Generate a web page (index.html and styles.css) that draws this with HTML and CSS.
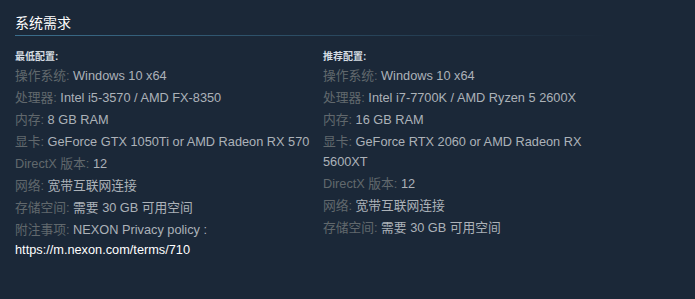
FILE: index.html
```html
<!DOCTYPE html>
<html lang="zh-CN">
<head>
<meta charset="utf-8">
<title>系统需求</title>
<link rel="stylesheet" href="styles.css">
</head>
<body>
<div class="sysreq">
  <h2 class="title">系统需求</h2>
  <div class="cols">
    <div class="col">
      <div class="col-head">最低配置:</div>
      <ul class="list">
        <li><span class="lbl">操作系统:</span> Windows 10 x64</li>
        <li><span class="lbl">处理器:</span> Intel i5-3570 / AMD FX-8350</li>
        <li><span class="lbl">内存:</span> 8 GB RAM</li>
        <li><span class="lbl">显卡:</span> GeForce GTX 1050Ti or AMD Radeon RX 570</li>
        <li><span class="lbl">DirectX 版本:</span> 12</li>
        <li><span class="lbl">网络:</span> 宽带互联网连接</li>
        <li><span class="lbl">存储空间:</span> 需要 30 GB 可用空间</li>
        <li><span class="lbl">附注事项:</span> NEXON Privacy policy : <span class="link">https://m.nexon.com/terms/710</span></li>
      </ul>
    </div>
    <div class="col">
      <div class="col-head">推荐配置:</div>
      <ul class="list">
        <li><span class="lbl">操作系统:</span> Windows 10 x64</li>
        <li><span class="lbl">处理器:</span> Intel i7-7700K / AMD Ryzen 5 2600X</li>
        <li><span class="lbl">内存:</span> 16 GB RAM</li>
        <li><span class="lbl">显卡:</span> GeForce RTX 2060 or AMD Radeon RX 5600XT</li>
        <li><span class="lbl">DirectX 版本:</span> 12</li>
        <li><span class="lbl">网络:</span> 宽带互联网连接</li>
        <li><span class="lbl">存储空间:</span> 需要 30 GB 可用空间</li>
      </ul>
    </div>
  </div>
</div>
</body>
</html>
```

FILE: styles.css
```css
html, body {
  margin: 0;
  padding: 0;
  background: #1b2838;
}
body {
  font-family: "Liberation Sans", Arial, "Noto Sans CJK SC", sans-serif;
  color: #acb2b8;
  font-size: 12.75px;
}
.sysreq {
  padding: 14px 0 0 15px;
  width: 590px;
}
.title {
  margin: 0;
  font-size: 14px;
  font-weight: normal;
  line-height: 18px;
  color: #ffffff;
  padding-bottom: 3px;
  border-bottom: 1px solid transparent;
  border-image: linear-gradient(to right, #3b6e8c 0%, rgba(59, 110, 140, 0) 100%) 1;
}
.cols {
  display: grid;
  grid-template-columns: 300px 300px;
  column-gap: 8px;
  margin-top: 12px;
}
.col-head {
  font-size: 10px;
  font-weight: bold;
  line-height: 18px;
  color: #d6dde3;
}
.list {
  list-style: none;
  margin: 0;
  padding: 0;
}
.list li {
  line-height: 20px;
  margin-bottom: 2px;
}
.lbl {
  color: #61686d;
}
.link {
  color: #ffffff;
}
```
